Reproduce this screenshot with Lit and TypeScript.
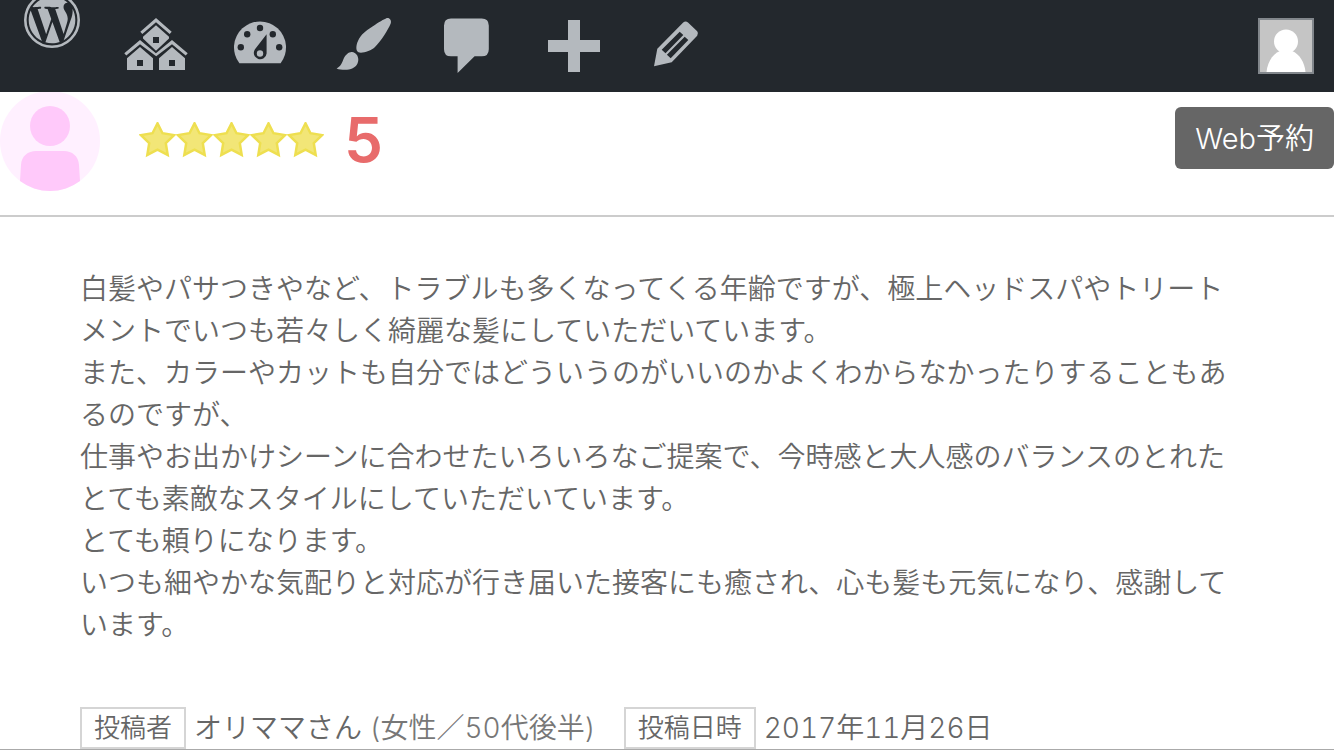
import { LitElement, html, css, svg } from "lit";
import { customElement } from "lit/decorators.js";

const star = svg`<path d="M18.5 2.4 23.5 12.2 35 14.1 26.8 22.1 28.7 33.900 18.5 28.600 8.3 33.900 10.2 22.1 2 14.1 13.5 12.2Z"/>`;

// Each toolbar drawing sits in a 104 x 92 cell; the cells share one coordinate strip.
const tools = [
  {
    label: "WordPress について",
    art: svg`<circle cx="52" cy="20" r="26.7" fill="none" stroke="currentColor" stroke-width="2.6"/>
      <path transform="translate(52 20) scale(2.16) translate(-12 -12)" d="M21.469 6.825c.84 1.537 1.318 3.3 1.318 5.175 0 3.979-2.156 7.456-5.363 9.325l3.295-9.527c.615-1.54.82-2.771.82-3.864 0-.405-.026-.78-.07-1.11zm-7.981.105c.647-.03 1.232-.105 1.232-.105.582-.075.514-.93-.067-.899 0 0-1.755.135-2.88.135-1.064 0-2.85-.15-2.85-.15-.585-.03-.661.855-.075.885 0 0 .54.061 1.125.09l1.68 4.605-2.37 7.08L5.354 6.9c.649-.03 1.234-.1 1.234-.1.585-.075.516-.93-.065-.896 0 0-1.746.138-2.874.138-.2 0-.438-.008-.69-.015C4.911 3.15 8.235 1.215 12 1.215c2.809 0 5.365 1.072 7.286 2.833-.046-.003-.091-.009-.141-.009-1.06 0-1.812.923-1.812 1.914 0 .89.513 1.643 1.06 2.531.411.72.89 1.643.89 2.977 0 .915-.354 1.994-.821 3.479l-1.075 3.585zM12 22.784c-1.059 0-2.081-.153-3.048-.437l3.237-9.406 3.315 9.087c.024.053.05.101.078.149-1.12.393-2.325.609-3.582.609zM1.211 12c0-1.564.336-3.05.935-4.39L7.29 21.709C3.694 19.96 1.212 16.271 1.211 12z"/>`,
  },
  {
    label: "参加サイト",
    art: svg`<path fill-rule="evenodd" d="M140.3 31.8 156 18 171.7 31.8 169.7 34 156 22.3 142.3 34Z
      M156 25.3 169 36.7V38.5L156 50.7 143 38.5V36.7ZM153 37V43H159V37Z
      M124.3 53.3 140 40 155.9 53.3 172 40 187.7 53.3 185.7 55.5 172 44.2 156.2 56.2 140 44.2 126.3 55.5Z
      M140 47 153 58.3V70H127V58.3ZM137 60V66H143V60Z
      M172 47 185 58.3V70H159V58.3ZM169 60V66H175V60Z"/>`,
  },
  {
    label: "ダッシュボード",
    art: svg`<path d="M239.4 63.3A26 26 0 1 1 280.6 63.3Z"/>
      <g class="cut"><circle cx="260" cy="28" r="3.2"/><circle cx="247.2" cy="34.3" r="3.2"/><circle cx="272.8" cy="34.3" r="3.2"/><circle cx="240.8" cy="47.2" r="3.2"/><circle cx="279.2" cy="47.2" r="3.2"/>
      <path d="M266.6 34.3V53.5A6.4 6.4 0 1 1 254.8 49.5Z"/></g><circle cx="260" cy="53.5" r="3.2"/>`,
  },
  {
    label: "カスタマイズ",
    art: svg`<path d="M386 18.4C389 17 392 20 390.7 23.5 388 30 381 41 375 47 371 51 362 53.7 358.5 52.3 355.5 51 356 45 358 41 361 34 366 31 371 27.5 376 24 382 20 386 18.4Z
      M336.6 68.4C341 66 342 63 343.5 59 345.5 54.5 349 51.7 352 52 356 52.5 358.5 56 358.3 60 358 65 354.5 68.5 349 69.5 345 70.2 340 69.8 336.6 68.4Z"/>`,
  },
  {
    label: "コメント",
    art: svg`<path d="M451 18.4H481.7Q488.8 18.4 488.8 25.5V49.2Q488.8 56.3 481.7 56.3H474.6L457.6 73V56.3H451Q444 56.3 444 49.2V25.5Q444 18.4 451 18.4Z"/>`,
  },
  {
    label: "新規追加",
    art: svg`<path d="M568 20H580V40H600V52H580V72H568V52H548V40H568Z"/>`,
  },
  {
    label: "編集",
    art: svg`<path fill-rule="evenodd" d="M683.2 22.6Q685.6 20.4 688 22.6L697.2 31.2Q699 33.4 697.2 35.8L671.7 62.3 654 66.2 657.3 48.7Z
      M679.7 31.7 661.7 49.7 665.5 53.2 683.3 35.1Z M684.7 36.7 666.9 54.7 670.7 58.2 688.3 40.1Z"/>`,
  },
];

@customElement("app-root")
export class AppRoot extends LitElement {
  static styles = css`
    :host {
      display: block;
      background: #fff;
      color: #666;
      font: 350 28px/42px "Noto Sans CJK JP", sans-serif;
    }
    .bar {
      display: flex;
      align-items: center;
      justify-content: space-between;
      height: 92px;
      padding-right: 20px;
      background: #23282d;
      color: #b4b9be;
    }
    .tools {
      display: flex;
    }
    .tool,
    .tool svg,
    .me,
    .me svg,
    .avatar,
    .stars svg {
      display: block;
    }
    .tool {
      color: inherit;
    }
    svg {
      fill: currentColor;
    }
    .cut {
      fill: #23282d;
    }
    .me {
      border: 2px solid #82878c;
      background: #c5c5c5;
      color: #fff;
    }
    .head {
      display: flex;
      align-items: flex-start;
      padding-bottom: 23px;
      border-bottom: 2px solid #ccc;
    }
    .avatar {
      flex: none;
    }
    .rating {
      display: flex;
      align-items: center;
      gap: 20px;
      margin-left: 39px;
      height: 96px;
    }
    .stars {
      display: flex;
    }
    .stars svg {
      fill: #f2e677;
      stroke: #eedf50;
      stroke-width: 2.5;
    }
    .score {
      font: 600 62px/62px Inter, sans-serif;
      color: #e86b6b;
    }
    .reserve {
      margin: 15px 0 0 auto;
      padding: 11px 20px 9px;
      border: 0;
      border-radius: 6px;
      background: #666;
      color: #fff;
      font: 350 29px/42px Inter, "Noto Sans CJK JP", sans-serif;
    }
    .body {
      padding: 49px 90px 63px 80px;
    }
    .body p {
      margin: 0;
    }
    .meta {
      display: flex;
      flex-wrap: wrap;
      column-gap: 28px;
      margin: 0;
      padding: 0 80px;
      border-bottom: 1px solid #aaa;
      font-family: Inter, "Noto Sans CJK JP", sans-serif;
      font-variant-numeric: tabular-nums;
    }
    .pair {
      display: flex;
      align-items: center;
      gap: 8px;
    }
    dt {
      padding: 0 12px;
      border: 2px solid #d5d5d5;
      font-size: 26px;
      line-height: 38px;
    }
    dd {
      margin: 0;
      line-height: 38px;
    }
    .who {
      color: #777;
    }
  `;

  render() {
    return html`
      <header class="bar">
        <nav class="tools">
          ${tools.map(
            (t, i) => html`<a class="tool" href="#" aria-label=${t.label}>
              <svg width="104" height="92" viewBox="${i * 104} 0 104 92" aria-hidden="true">${t.art}</svg>
            </a>`
          )}
        </nav>
        <a class="me" href="#" aria-label="アカウント">
          <svg width="52" height="52" viewBox="0 0 52 52" aria-hidden="true">
            <circle cx="26" cy="21.5" r="12" />
            <path d="M6.5 52C7.5 42 12.5 34 20 31H32C39.5 34 44.5 42 45.5 52Z" />
          </svg>
        </a>
      </header>
      <article>
        <div class="head">
          <svg class="avatar" width="100" height="100" viewBox="0 1 100 100" aria-hidden="true">
            <circle cx="50" cy="50" r="50" fill="#fff0ff" />
            <circle cx="50" cy="35" r="20" fill="#ffc9fa" />
            <path fill="#ffc9fa" d="M20 90 21 74C21.5 65 28 60 36 60H64C72 60 78.5 65 79 74L80 90A50 50 0 0 1 20 90Z" />
          </svg>
          <div class="rating">
            <div class="stars" role="img" aria-label="5つ星">
              ${[1, 2, 3, 4, 5].map(() => html`<svg width="37" height="36" viewBox="0 1 37 36">${star}</svg>`)}
            </div>
            <span class="score">5</span>
          </div>
          <button class="reserve" type="button">Web予約</button>
        </div>
        <div class="body">
          <p>白髪やパサつきやなど、トラブルも多くなってくる年齢ですが、極上ヘッドスパやトリートメントでいつも若々しく綺麗な髪にしていただいています。</p>
          <p>また、カラーやカットも自分ではどういうのがいいのかよくわからなかったりすることもあるのですが、</p>
          <p>仕事やお出かけシーンに合わせたいろいろなご提案で、今時感と大人感のバランスのとれたとても素敵なスタイルにしていただいています。</p>
          <p>とても頼りになります。</p>
          <p>いつも細やかな気配りと対応が行き届いた接客にも癒され、心も髪も元気になり、感謝しています。</p>
        </div>
        <dl class="meta">
          <div class="pair">
            <dt>投稿者</dt>
            <dd>オリママさん <span class="who">(女性／50代後半)</span></dd>
          </div>
          <div class="pair">
            <dt>投稿日時</dt>
            <dd>2017年11月26日</dd>
          </div>
        </dl>
      </article>
    `;
  }
}
